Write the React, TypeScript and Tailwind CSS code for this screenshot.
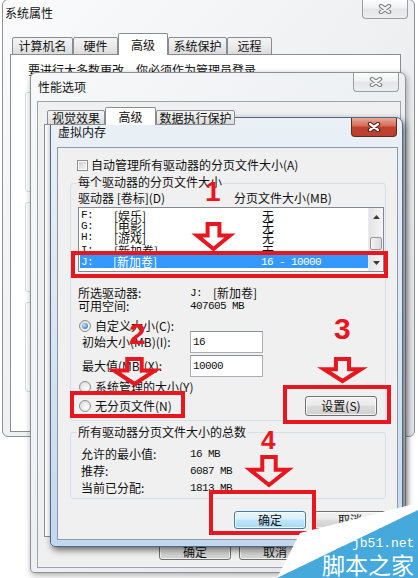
import clsx from "clsx"

const RED = "#e8161e"
const mono = "font-['Liberation_Mono',monospace] text-[11px] tracking-[-0.6px]"

function CloseButton({ active, className }: { active?: boolean; className?: string }) {
  return (
    <div
      className={clsx(
        "flex h-[19px] w-[46px] shrink-0 items-center justify-center rounded-b-[4px] border border-t-0",
        active
          ? "border-[#5c2a24] bg-[linear-gradient(#e9a99a,#d36b58_45%,#c2402c_50%,#b9412f)]"
          : "border-[#9a9ea5] bg-[linear-gradient(#fdfdfd,#f0f1f3_45%,#e3e5e8_50%,#eceef0)]",
        className,
      )}
    >
      <svg width="14" height="10" viewBox="0 0 14 10">
        <path d="M3 2 L11 8 M11 2 L3 8" stroke={active ? "#4a1c16" : "#7a7a7a"} strokeWidth="4.4" strokeLinecap="round" />
        <path d="M3 2 L11 8 M11 2 L3 8" stroke={active ? "#ffffff" : "#f4f4f4"} strokeWidth="2.2" strokeLinecap="round" />
      </svg>
    </div>
  )
}

function Button({ label, primary, className }: { label: string; primary?: boolean; className: string }) {
  return (
    <div
      className={clsx(
        "flex shrink-0 items-center justify-center rounded-[3px] border shadow-[inset_0_0_0_1px_rgba(255,255,255,0.75)]",
        primary
          ? "border-[#3c7fb1] bg-[linear-gradient(#eaf6fd,#d9f0fc_45%,#bee6fd_50%,#a7d9f5)]"
          : "border-[#707070] bg-[linear-gradient(#f2f2f2,#ebebeb_45%,#dddddd_50%,#cfcfcf)]",
        className,
      )}
    >
      {label}
    </div>
  )
}

function Tab({ label, active, className }: { label: string; active?: boolean; className: string }) {
  return (
    <div
      className={clsx(
        "flex shrink-0 items-center justify-center rounded-t-[2px] border border-[#898c95]",
        active ? "relative z-10 border-b-0 bg-white" : "bg-linear-to-b from-[#f4f4f4] via-[#ebebeb] to-[#dbdbdb]",
        className,
      )}
    >
      {label}
    </div>
  )
}

function Checkbox() {
  return (
    <div className="h-[11px] w-[11px] shrink-0 border border-[#8e8f8f] bg-white p-[1px]">
      <div className="h-full w-full bg-linear-to-br from-[#cfcfcf] to-[#f5f5f5]" />
    </div>
  )
}

function Radio({ checked }: { checked?: boolean }) {
  return (
    <div className="flex h-[12px] w-[12px] shrink-0 items-center justify-center rounded-full border border-[#8e8f8f] bg-[radial-gradient(circle_at_65%_65%,#ffffff,#d4d4d4)]">
      {checked && <div className="h-[6px] w-[6px] rounded-full bg-[radial-gradient(circle_at_35%_35%,#bfe4ff,#1d5da8)]" />}
    </div>
  )
}

function GroupBox({
  legend,
  className,
  legendClass,
  children,
}: {
  legend: string
  className: string
  legendClass: string
  children?: React.ReactNode
}) {
  return (
    <div className={clsx("relative w-[316px] shrink-0 rounded-[3px] border border-[#d5dfe5]", className)}>
      <span className={clsx("absolute left-[6px] bg-[#f0f0f0] px-[1px]", legendClass)}>{legend}</span>
      {children}
    </div>
  )
}

const drives = [
  ["F:", "[娱乐]", "无"],
  ["G:", "[电影]", "无"],
  ["H:", "[游戏]", "无"],
]

function DriveList() {
  return (
    <div className="mt-[3px] flex h-[65px] w-[306px] overflow-hidden border border-[#828790] bg-white">
      <div className="flex w-[289px] flex-col pt-[2px]">
        {drives.map(([d, l, s]) => (
          <div key={d} className="grid h-[11px] grid-cols-[33px_148px_1fr] pl-[2px] leading-[11px]">
            <span className={mono}>{d}</span>
            <span>{l}</span>
            <span>{s}</span>
          </div>
        ))}
        <div className="grid h-[11px] grid-cols-[33px_148px_1fr] overflow-hidden pl-[2px] pt-[2px] leading-[11px]">
          <span className={mono}>I:</span>
          <span>[新加卷]</span>
          <span>无</span>
        </div>
        <div className="ml-[1px] mt-[1px] grid h-[13px] grid-cols-[32px_148px_1fr] items-center bg-[#3399ff] pl-[1px] text-white">
          <span className={mono}>J:</span>
          <span>[新加卷]</span>
          <span className={mono}>16 - 10000</span>
        </div>
      </div>
      <div className="flex w-[15px] flex-col border-l border-[#ececec] bg-[linear-gradient(90deg,#e4e4e4,#f5f5f5)]">
        <div className="flex h-[17px] items-center justify-center">
          <svg width="7" height="4">
            <path d="M0 4 L3.5 0 L7 4Z" fill="#3c3c3c" />
          </svg>
        </div>
        <div className="mx-[1px] mt-[12px] h-[13px] rounded-[2px] border border-[#979797] bg-linear-to-r from-[#f4f4f4] to-[#dadada]" />
        <div className="flex-1" />
        <div className="flex h-[17px] items-center justify-center">
          <svg width="7" height="4">
            <path d="M0 0 L3.5 4 L7 0Z" fill="#3c3c3c" />
          </svg>
        </div>
      </div>
    </div>
  )
}

function SystemWindow() {
  return (
    <div className="absolute left-[2px] top-[-1px] flex h-[438px] w-[413px] flex-col rounded-[6px] border border-[#8d9094] bg-linear-to-br from-[#fbfbfc] via-[#eef0f2] to-[#e1e4e8]">
      <div className="flex h-[33px] items-start justify-between">
        <span className="ml-[2px] mt-[7px]">系统属性</span>
        <CloseButton className="mr-[6px]" />
      </div>
      <div className="relative z-10 -mb-px flex h-[22px] items-end pl-[9px]">
        <Tab label="计算机名" className="h-[18px] w-[61px]" />
        <Tab label="硬件" className="h-[18px] w-[45px]" />
        <Tab label="高级" active className="h-[22px] w-[50px]" />
        <Tab label="系统保护" className="h-[18px] w-[59px]" />
        <Tab label="远程" className="h-[18px] w-[45px]" />
      </div>
      <div className="ml-[7px] flex h-[378px] w-[391px] flex-col border border-[#898c95] bg-white">
        <div className="pl-[17px] pt-[9px]">要进行大多数更改，你必须作为管理员登录。</div>
        <div className="ml-[14px] mt-[16px] h-[100px] w-[362px] rounded-[3px] border border-[#d5dfe5]" />
        <div className="ml-[14px] mt-[10px] h-[90px] w-[362px] rounded-[3px] border border-[#d5dfe5]" />
        <div className="ml-[14px] mt-[10px] h-[90px] w-[362px] rounded-[3px] border border-[#d5dfe5]" />
      </div>
    </div>
  )
}

function PerfWindow() {
  return (
    <div className="absolute left-[30px] top-[72px] flex h-[501px] w-[376px] flex-col rounded-b-[4px] rounded-t-[6px] border border-[#8d9094] bg-linear-to-br from-[#f7f8fa] via-[#edf0f3] to-[#e2e6eb] shadow-[1px_2px_6px_rgba(0,0,0,0.35)]">
      <div className="flex h-[28px] items-start justify-between">
        <span className="ml-[7px] mt-[8px]">性能选项</span>
        <CloseButton className="mr-[6px]" />
      </div>
      <div className="ml-[6px] flex h-[467px] w-[364px] flex-col border border-[#a0a4aa] bg-[#f0f0f0]">
        <div className="relative z-10 -mb-px mt-[5px] flex h-[18px] items-end pl-[9px]">
          <Tab label="视觉效果" className="h-[15px] w-[58px]" />
          <Tab label="高级" active className="h-[18px] w-[51px]" />
          <Tab label="数据执行保护" className="h-[15px] w-[79px]" />
        </div>
        <div className="ml-[6px] h-[413px] w-[351px] border border-[#898c95] bg-white" />
        <div className="mt-[6px] flex justify-end gap-[8px] pr-[9px]">
          <Button label="确定" className="h-[17px] w-[72px]" />
          <Button label="取消" className="h-[17px] w-[72px]" />
          <Button label="应用(A)" className="h-[17px] w-[72px]" />
        </div>
      </div>
    </div>
  )
}

function VmWindow() {
  return (
    <div className="absolute left-[50px] top-[117px] flex h-[430px] w-[353px] flex-col rounded-b-[5px] rounded-t-[7px] border border-[#4f6a88] bg-linear-to-b from-[#eaf0f6] via-[#d9e6f2] to-[#c3d8ee] shadow-[2px_3px_7px_rgba(0,0,0,0.6)]">
      <div className="flex h-[29px] items-start justify-between">
        <span className="ml-[7px] mt-[8px]">虚拟内存</span>
        <CloseButton active className="mr-[5px]" />
      </div>
      <div className="ml-[6px] flex h-[393px] w-[341px] flex-col border border-[#8e9aa8] bg-[#f0f0f0] pl-[12px] pr-[10px]">
        <div className="mt-[11px] flex h-[12px] items-center gap-[3px] pl-[7px]">
          <Checkbox />
          <span>自动管理所有驱动器的分页文件大小(A)</span>
        </div>

        <GroupBox legend="每个驱动器的分页文件大小" className="mt-[12px] h-[238px]" legendClass="-top-[8px]">
          <div className="flex flex-col pl-[7px]">
            <div className="mt-[8px] flex h-[12px]">
              <span className="w-[156px]">驱动器 [卷标](D)</span>
              <span>分页文件大小(MB)</span>
            </div>
            <DriveList />
            <div className="mt-[14px] flex h-[13px] items-center">
              <span className="w-[112px]">所选驱动器:</span>
              <span className={clsx(mono, "w-[23px]")}>J:</span>
              <span>[新加卷]</span>
            </div>
            <div className="flex h-[13px] items-center">
              <span className="w-[112px]">可用空间:</span>
              <span className={mono}>407605 MB</span>
            </div>
            <div className="mt-[8px] flex h-[12px] items-center gap-[4px] pl-[1px]">
              <Radio checked />
              <span>自定义大小(C):</span>
            </div>
            <div className="-mt-[1px] flex h-[22px] items-center pl-[4px]">
              <span className="w-[108px]">初始大小(MB)(I):</span>
              <div className="flex h-[22px] w-[73px] items-center border border-[#abadb3] border-t-[#8b8f98] bg-white pl-[2px]">
                <span className={mono}>16</span>
              </div>
            </div>
            <div className="mt-[2px] flex h-[22px] items-center pl-[4px]">
              <span className="w-[108px]">最大值(MB)(X):</span>
              <div className="flex h-[22px] w-[73px] items-center border border-[#abadb3] border-t-[#8b8f98] bg-white pl-[2px]">
                <span className={mono}>10000</span>
              </div>
            </div>
            <div className="mt-[4px] flex h-[12px] items-center gap-[4px] pl-[1px]">
              <Radio />
              <span>系统管理的大小(Y)</span>
            </div>
            <div className="mt-[3px] flex h-[20px] items-center justify-between pl-[1px] pr-[8px]">
              <div className="flex items-center gap-[4px]">
                <Radio />
                <span>无分页文件(N)</span>
              </div>
              <Button label="设置(S)" className="h-[20px] w-[72px]" />
            </div>
          </div>
        </GroupBox>

        <GroupBox legend="所有驱动器分页文件大小的总数" className="mt-[11px] h-[67px]" legendClass="-top-[7px]">
          <div className="flex flex-col pl-[10px] pt-[12px]">
            {[
              ["允许的最小值:", "16 MB"],
              ["推荐:", "6087 MB"],
              ["当前已分配:", "1813 MB"],
            ].map(([k, v]) => (
              <div key={k} className="flex h-[17px] items-center">
                <span className="w-[109px]">{k}</span>
                <span className={mono}>{v}</span>
              </div>
            ))}
          </div>
        </GroupBox>

        <div className="mr-[1px] mt-[12px] flex justify-end gap-[8px]">
          <Button label="确定" primary className="h-[18px] w-[72px]" />
          <Button label="取消" className="h-[18px] w-[72px]" />
        </div>
      </div>
    </div>
  )
}

function Arrow({ w, h, className }: { w: number; h: number; className: string }) {
  const s = 2
  const cx = w / 2
  const sh = w * 0.16
  const neck = h * 0.45
  const d = `M${cx - sh} ${s} H${cx + sh} V${neck} H${w - s} L${cx} ${h - s - 1} L${s} ${neck} H${cx - sh} Z`
  return (
    <svg className={clsx("absolute overflow-visible", className)} width={w} height={h}>
      <path d={d} fill="none" stroke={RED} strokeWidth={4} strokeLinejoin="miter" />
    </svg>
  )
}

function Annotations() {
  const digit = "absolute font-['Liberation_Sans',sans-serif] font-bold text-[#e8161e]"
  return (
    <>
      <div className="absolute left-[71px] top-[251px] h-[27px] w-[317px] border-4 border-[#e8161e]" />
      <div className="absolute left-[70px] top-[391px] h-[27px] w-[115px] border-4 border-[#e8161e]" />
      <div className="absolute left-[283px] top-[385px] h-[39px] w-[108px] border-4 border-[#e8161e]" />
      <div className="absolute left-[209px] top-[490px] h-[45px] w-[107px] border-4 border-[#e8161e]" />

      <span className={clsx(digit, "left-[205px] top-[178px] text-[28px] leading-[28px]")}>1</span>
      <span className={clsx(digit, "left-[129px] top-[319px] text-[30px] leading-[30px]")}>2</span>
      <span className={clsx(digit, "left-[334px] top-[314px] text-[30px] leading-[30px]")}>3</span>
      <span className={clsx(digit, "left-[261px] top-[427px] text-[26px] leading-[26px]")}>4</span>

      <Arrow w={37} h={30} className="left-[195px] top-[222px]" />
      <Arrow w={45} h={30} className="left-[112px] top-[357px]" />
      <Arrow w={41} h={27} className="left-[322px] top-[357px]" />
      <Arrow w={42} h={33} className="left-[248px] top-[455px]" />
    </>
  )
}

function Watermark() {
  return (
    <>
      <svg className="absolute left-0 top-0" width="418" height="578">
        <polygon points="300,533 418,503 418,510 277,578" fill="#ffffff" />
        <polygon points="277,578 418,510 418,578" fill="#45a9dc" />
      </svg>
      <span className="absolute left-[352px] top-[537px] font-['Liberation_Mono',monospace] text-[13px] leading-[14px] text-white">
        jb51.net
      </span>
      <span className="absolute left-[322px] top-[551px] text-[23px] leading-[26px] text-white">脚本之家</span>
    </>
  )
}

export default function App() {
  return (
    <div className="relative h-[578px] w-[418px] overflow-hidden bg-white font-['Noto_Sans_CJK_SC',sans-serif] text-[12px] leading-[12px] text-[#111]">
      <SystemWindow />
      <PerfWindow />
      <VmWindow />
      <Annotations />
      <Watermark />
    </div>
  )
}
